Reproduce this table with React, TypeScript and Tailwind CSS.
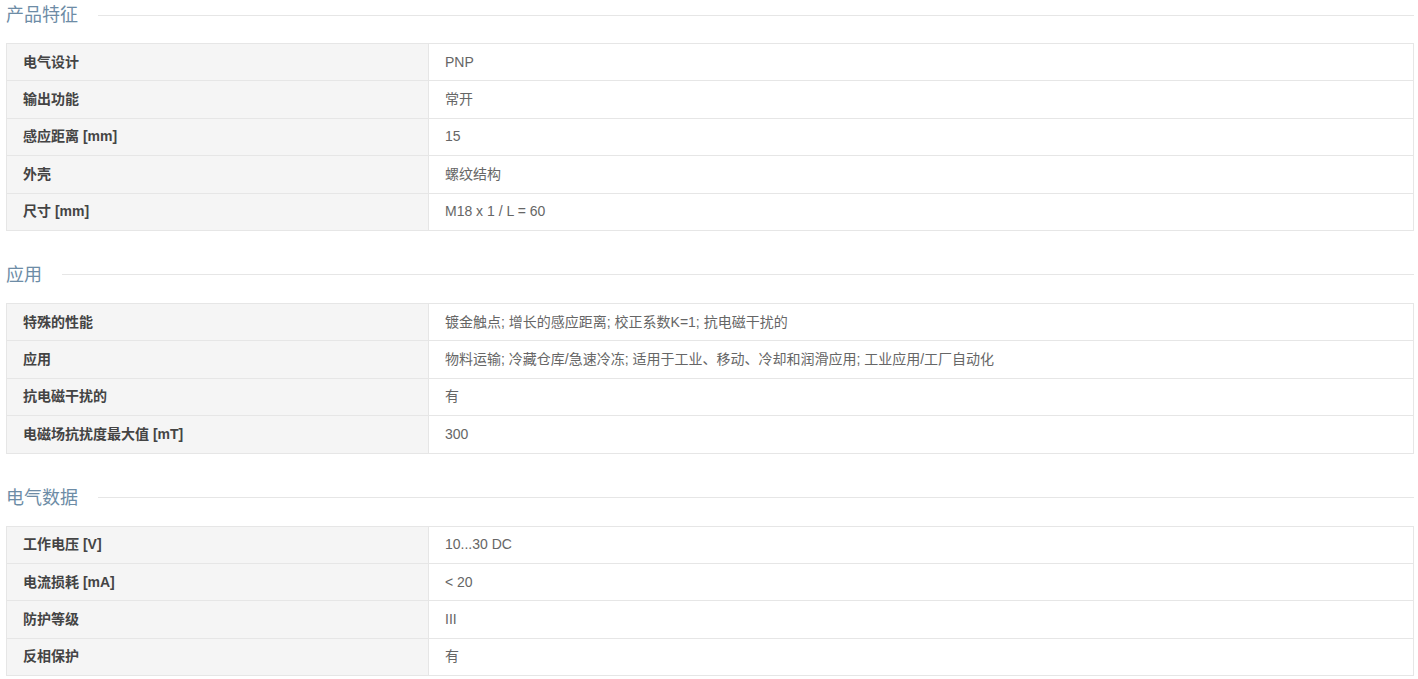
// Product spec sheet
const sections: { title: string; rows: [string, string][] }[] = [
  {
    title: "产品特征",
    rows: [
      ["电气设计", "PNP"],
      ["输出功能", "常开"],
      ["感应距离 [mm]", "15"],
      ["外壳", "螺纹结构"],
      ["尺寸 [mm]", "M18 x 1 / L = 60"],
    ],
  },
  {
    title: "应用",
    rows: [
      ["特殊的性能", "镀金触点; 增长的感应距离; 校正系数K=1; 抗电磁干扰的"],
      ["应用", "物料运输; 冷藏仓库/急速冷冻; 适用于工业、移动、冷却和润滑应用; 工业应用/工厂自动化"],
      ["抗电磁干扰的", "有"],
      ["电磁场抗扰度最大值 [mT]", "300"],
    ],
  },
  {
    title: "电气数据",
    rows: [
      ["工作电压 [V]", "10...30 DC"],
      ["电流损耗 [mA]", "< 20"],
      ["防护等级", "III"],
      ["反相保护", "有"],
    ],
  },
];

const SectionTitle = ({ title }: { title: string }) => (
  <div className="flex items-center h-[30px]">
    <span className="text-[18px] leading-[30px] text-[#6d8ca6] pr-5">{title}</span>
    <div className="flex-1 h-px bg-[#e6e6e6]" />
  </div>
);

const SpecTable = ({ rows }: { rows: [string, string][] }) => (
  <div className="mt-[13px] border-t border-x border-[#e6e6e6]">
    {rows.map(([label, value]) => (
      <div key={label} className="flex h-[37.4px] border-b border-[#e6e6e6]">
        <div className="w-[422px] shrink-0 bg-[#f5f5f5] border-r border-[#e6e6e6] pl-4 flex items-center font-bold text-[#444]">
          {label}
        </div>
        <div className="flex-1 pl-4 flex items-center text-[#666]">{value}</div>
      </div>
    ))}
  </div>
);

export default function App() {
  return (
    <div
      className="bg-white min-h-screen pl-[6px] pr-[4px] text-[14px]"
      style={{ fontFamily: '"Liberation Sans", "Noto Sans CJK SC", sans-serif' }}
    >
      {sections.map((s, i) => (
        <div key={s.title} className={i > 0 ? "mt-[29px]" : ""}>
          <SectionTitle title={s.title} />
          <SpecTable rows={s.rows} />
        </div>
      ))}
    </div>
  );
}
